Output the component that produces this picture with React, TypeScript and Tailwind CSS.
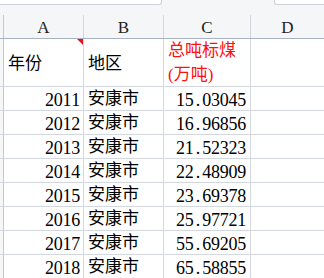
import React from "react";

const rows: [string, string][] = [
  ["2011", "15.03045"],
  ["2012", "16.96856"],
  ["2013", "21.52323"],
  ["2014", "22.48909"],
  ["2015", "23.69378"],
  ["2016", "25.97721"],
  ["2017", "55.69205"],
  ["2018", "65.58855"],
];

const serif = { fontFamily: '"Liberation Serif", "DejaVu Serif", serif' } as const;
const cjk = { fontFamily: '"Liberation Serif", "Noto Sans CJK SC", serif' } as const;

function Num({ v }: { v: string }) {
  return (
    <span style={serif} className="text-[18px] leading-none pt-[2px]">
      {v.split("").map((c, i) => (
        <span key={i} className="inline-block w-[8.75px] text-center">
          {c}
        </span>
      ))}
    </span>
  );
}

export default function App() {
  return (
    <div className="w-[324px] h-[278px] overflow-hidden bg-[#f5f6f8] text-black">
      {/* top strip */}
      <div className="flex h-[5px]">
        <div className="w-[162px] h-[5px] bg-white border-b border-r border-[#cdd1da] rounded-br-[3px]" />
        <div className="flex-1" />
        <div className="w-[50px] h-[5px] bg-white border-b border-l border-[#cdd1da] rounded-bl-[3px]" />
      </div>
      <div className="h-[10px]" />
      {/* column headers */}
      <div className="flex h-[24px] border-b border-[#a9b1c4] text-[#222] pt-[2px]" style={serif}>
        <div className="w-[4px] border-r border-[#c3c8d4] -mt-[2px]" />
        <div className="w-[80px] border-r border-[#d3d7df] -mt-[2px] pt-[2px] flex items-center justify-center text-[17px]">A</div>
        <div className="w-[80px] border-r border-[#d3d7df] -mt-[2px] pt-[2px] flex items-center justify-center text-[17px]">B</div>
        <div className="w-[87px] border-r border-[#d3d7df] -mt-[2px] pt-[2px] flex items-center justify-center text-[17px]">C</div>
        <div className="flex-1 flex items-center justify-center text-[17px]">D</div>
      </div>
      {/* first data row */}
      <div className="flex h-[48px] border-b border-[#d3d7df]">
        <div className="w-[4px] border-r border-[#c3c8d4] bg-[#f5f6f8]" />
        <div className="relative w-[80px] border-r border-[#d3d7df] bg-white flex items-center pl-[4px] pt-[2px] text-[17px]" style={cjk}>
          年份
          <div className="absolute top-0 right-0 w-0 h-0 border-t-[6px] border-l-[6px] border-t-[#e8141c] border-l-transparent" />
        </div>
        <div className="w-[80px] border-r border-[#d3d7df] bg-white flex items-center pl-[4px] pt-[2px] text-[17px]" style={cjk}>
          地区
        </div>
        <div className="w-[87px] border-r border-[#d3d7df] bg-white flex flex-col justify-center pl-[4px] text-[17px] leading-[24px] text-[#ff1010]" style={cjk}>
          <div>总吨标煤</div>
          <div>(万吨)</div>
        </div>
        <div className="flex-1 bg-white" />
      </div>
      {rows.map(([y, v]) => (
        <div key={y} className="flex h-[24px] border-b border-[#d3d7df]">
          <div className="w-[4px] border-r border-[#c3c8d4] bg-[#f5f6f8]" />
          <div className="w-[80px] border-r border-[#d3d7df] bg-white flex items-center justify-end pr-[3px]">
            <Num v={y} />
          </div>
          <div className="w-[80px] border-r border-[#d3d7df] bg-white flex items-center pl-[4px] pt-[1px] text-[17px]" style={cjk}>
            安康市
          </div>
          <div className="w-[87px] border-r border-[#d3d7df] bg-white flex items-center justify-end pr-[4px]">
            <Num v={v} />
          </div>
          <div className="flex-1 bg-white" />
        </div>
      ))}
    </div>
  );
}
